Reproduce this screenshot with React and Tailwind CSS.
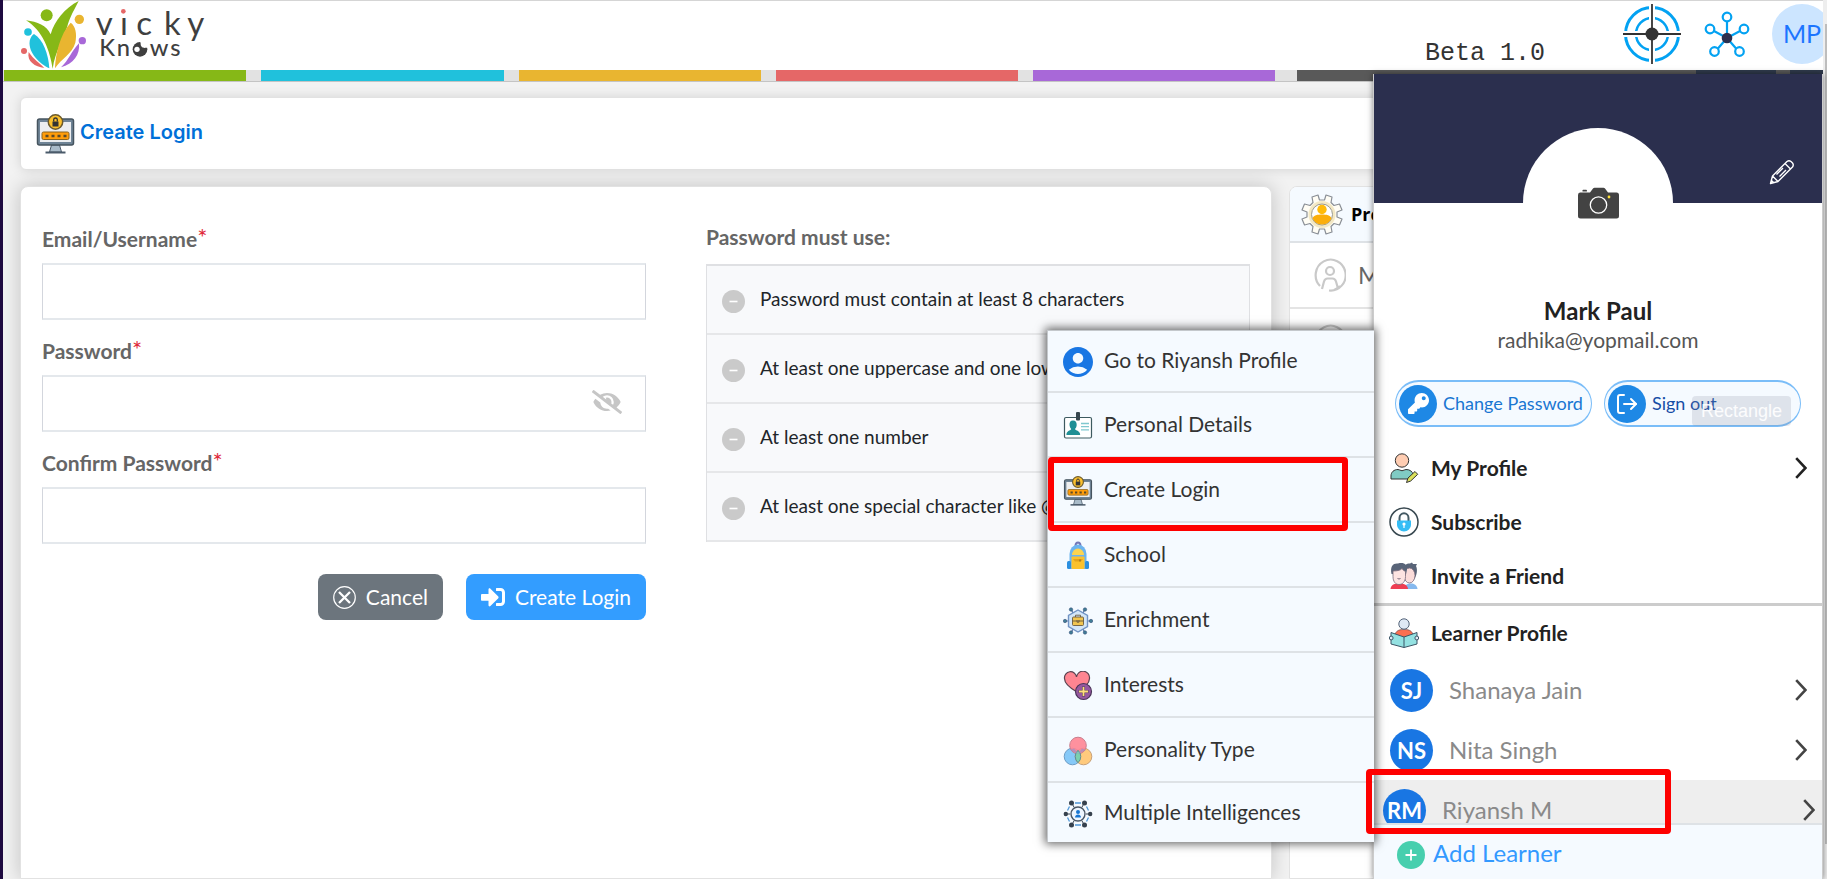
import React from "react";
import { FaEyeSlash, FaKey, FaSignInAlt } from "react-icons/fa";
import { MdAccountCircle } from "react-icons/md";
import { LogOut } from "lucide-react";

function Logo() {
  return (
    <svg width="188" height="69" viewBox="54 0 564 207" role="img" aria-label="vicky Knows">
      <g fill="#86b817">
        <circle cx="140" cy="43" r="18" />
        <path d="M78 58C112 62 140 74 152 100C163 60 195 20 236 0C215 40 207 56 202 76C188 122 166 150 158 203C150 150 128 88 78 58Z" />
      </g>
      <g fill="#e9b530">
        <circle cx="238" cy="55" r="14" />
        <path d="M212 65C226 74 232 98 226 125C216 160 184 172 165 202C166 160 180 100 212 65Z" />
      </g>
      <g fill="#20c1dc">
        <circle cx="84" cy="93" r="11.500" />
        <path d="M102 99C130 115 145 160 148 202C120 190 84 155 89 120Q93 104 102 99Z" />
      </g>
      <g fill="#e56767">
        <circle cx="72" cy="150" r="9" />
        <path d="M86 153C100 175 120 187 133 201C105 197 80 182 86 153Z" />
      </g>
      <g fill="#a868d8">
        <circle cx="247" cy="119" r="11" />
        <path d="M237 127C241 160 220 190 183 199C206 178 215 150 237 127Z" />
      </g>
      <g fill="#3f3f3f" fontFamily="Lato, sans-serif">
        <text x="287 360 409 492 562" y="103" fontSize="99">vicky</text>
        <text x="298 350 397 449 511" y="166" fontSize="71" fontWeight="500">Knows</text>
      </g>
      <rect x="356" y="20" width="29" height="26" fill="#fff" />
      <circle cx="370" cy="31" r="7" fill="#e56767" />
      <circle cx="420" cy="144" r="25" fill="#fff" />
      <circle cx="420" cy="145" r="22" fill="#3f3f3f" />
      <path d="M419 121C434 119 447 134 443 141C436 139 432 143 426 138C419 133 425 127 419 121Z" fill="#fff" />
      <circle cx="411" cy="145" r="8" fill="#fff" />
    </svg>
  );
}

function LoginIcon({ className }) {
  return (
    <svg className={className} viewBox="0 0 38 40">
      <path d="M15 31h8l2 7H13Z" fill="#a9bbc9" stroke="#4a5a6a" />
      <path d="M9 38.500h20" stroke="#4a5a6a" strokeWidth="2" />
      <rect x="1" y="5" width="36" height="26" rx="2" fill="#6f8496" stroke="#46545f" strokeWidth="1.500" />
      <rect x="3.500" y="8" width="31" height="20" fill="#eceef0" />
      <rect x="5.500" y="18" width="27" height="7.500" rx="1.500" fill="#ff9d0a" stroke="#8a6420" />
      <path d="M9 22h3m3 0h3m3 0h3m3 0h3" stroke="#5a4a2a" strokeWidth="2.500" />
      <circle cx="19" cy="8" r="7.200" fill="#fbc02d" stroke="#6b5a2c" strokeWidth="1.500" />
      <rect x="16" y="7.500" width="6" height="5" fill="#333" />
      <path d="M17.200 7.500V5.800a1.800 1.800 0 0 1 3.600 0v1.700" fill="none" stroke="#333" strokeWidth="1.300" />
    </svg>
  );
}

const iconSize = "w-[30px] h-[30px] shrink-0";

function IdIcon() {
  return (
    <svg className={iconSize} viewBox="0 0 30 30">
      <rect x="1.500" y="6.500" width="27" height="20.500" rx="1.500" fill="#fff" stroke="#3d5a60" strokeWidth="1.200" />
      <rect x="13" y="1" width="4" height="8.500" rx="1" fill="#37474f" />
      <path d="M10 9.500c-2.700 0-3.700 2-3.500 4.500.2 2 1 3 1.700 4-1 2-4.800 1.600-4.800 6h13.800c0-4.400-4.200-4-5.200-6 .8-1 1.600-2 1.700-4 .1-2.500-1-4.500-3.700-4.500Z" fill="#1f8f95" />
      <path d="M18 12.500h8M18 15.700h8M18 18.900h8" stroke="#80c8cf" strokeWidth="1.300" />
    </svg>
  );
}

function BackpackIcon() {
  return (
    <svg className={iconSize} viewBox="0 0 30 30">
      <path d="M12.500 5a2.500 3.500 0 0 1 5 0" fill="none" stroke="#7378b8" strokeWidth="2" />
      <path d="M6.500 28V13a8.500 9.500 0 0 1 17 0v15Z" fill="#6cb4ee" />
      <rect x="4" y="20" width="4" height="8" rx="1.500" fill="#2b8fe0" />
      <rect x="22" y="20" width="4" height="8" rx="1.500" fill="#2b8fe0" />
      <path d="M9 14a6 6.500 0 0 1 12 0Z" fill="#fcd44f" />
      <rect x="8.500" y="15.500" width="13" height="12.500" rx="1" fill="#fbc12d" />
      <path d="M10 18h10l-2 2.500h-6Z" fill="#e3a31c" />
      <path d="M17 18.500v2" stroke="#7a5a20" />
    </svg>
  );
}

function EnrichmentIcon() {
  return (
    <svg className={iconSize} viewBox="0 0 30 30">
      <path d="M15 15H2M15 15h13M8.500 4l3 6M21.500 4l-3 6M8.500 26l3-6M21.500 26l-3-6" stroke="#5a78a8" strokeWidth="1.200" />
      <g fill="#3f7d96" stroke="#38507a" strokeWidth=".6">
        <circle cx="2" cy="15" r="1.700" /><circle cx="28" cy="15" r="1.700" />
        <circle cx="8" cy="3.500" r="1.700" /><circle cx="22" cy="3.500" r="1.700" />
        <circle cx="8" cy="26.500" r="1.700" /><circle cx="22" cy="26.500" r="1.700" />
      </g>
      <path d="M15 4l9.500 5.500v11L15 26l-9.500-5.500v-11Z" fill="#d3e6f8" stroke="#7193c4" strokeWidth="1.400" />
      <rect x="9.500" y="11" width="11" height="8.500" rx="1" fill="#f1c550" stroke="#6a5a40" strokeWidth=".9" />
      <path d="M12.500 11V9.200h5V11M9.500 15h11M14 14v2.200h2V14" fill="none" stroke="#6a5a40" strokeWidth=".9" />
    </svg>
  );
}

function HeartIcon() {
  return (
    <svg className={iconSize} viewBox="0 0 30 30">
      <path d="M14 21C7 17 1.500 12 1.500 7.500a6 6 0 0 1 12-1.500 6 6 0 0 1 13 1.500C26.500 12 21 17 14 21Z" fill="#ff8591" stroke="#5a4350" strokeWidth="1.200" />
      <circle cx="20.500" cy="20.500" r="8" fill="#96589f" stroke="#4a3558" strokeWidth="1.200" />
      <path d="M20.500 15.500v10M15.500 20.500h10" stroke="#55405a" strokeWidth="3" />
      <path d="M20.500 16v9M16 20.500h9" stroke="#ffdf7c" strokeWidth="1.800" />
    </svg>
  );
}

function VennIcon() {
  return (
    <svg className={iconSize} viewBox="0 0 30 30">
      <circle cx="9.500" cy="20.500" r="8.300" fill="#86c9f8" stroke="#6b9bc5" />
      <circle cx="20.500" cy="20.500" r="8.300" fill="#ffca7d" stroke="#c7a078" />
      <circle cx="15" cy="9.500" r="8.300" fill="#ff8593" fillOpacity=".9" stroke="#c97c8c" />
      <path d="M15 14.300a8.300 8.300 0 0 1 0 12.400 8.300 8.300 0 0 1 0-12.400Z" fill="#7bd0ae" stroke="#5f8c94" />
      <path d="M7 14l4-1.500L15 17.500l4-5 4 1.500-8 3.800Z" fill="#9a91c9" fillOpacity=".7" />
    </svg>
  );
}

function IntelligenceIcon() {
  return (
    <svg className={iconSize} viewBox="0 0 30 30">
      <path d="M12 4h6M12 26h6M4.500 11.500l2-4M23.500 7.500l2 4M4.500 18.500l2 4M23.500 22.500l2-4" stroke="#4f97d8" strokeWidth="1.300" />
      <path d="M2.500 15H7M23 15h4.500M8.500 3.500l2.700 5M21.500 3.500l-2.700 5M8.500 26.500l2.700-5M21.500 26.500l-2.700-5" stroke="#3a4654" />
      <g fill="#36414e">
        <circle cx="2.800" cy="15" r="2.200" /><circle cx="27.200" cy="15" r="2.200" />
        <circle cx="8.500" cy="4" r="2.500" /><circle cx="21.500" cy="4" r="2.500" />
        <circle cx="8.500" cy="26" r="2.500" /><circle cx="21.500" cy="26" r="2.500" />
      </g>
      <circle cx="15" cy="15" r="7" fill="#eef6ff" stroke="#4a5665" strokeWidth="1.400" />
      <circle cx="15" cy="13" r="2" fill="#1976d2" />
      <path d="M12 18.500c0-4 6-4 6 0Z" fill="#1976d2" />
    </svg>
  );
}

function ProfileEditIcon() {
  return (
    <svg className={iconSize} viewBox="0 0 30 30">
      <circle cx="13" cy="7.500" r="6.700" fill="#ffcdb2" stroke="#333" strokeWidth="1" />
      <path d="M2 26v-3c0-4 3-6.500 7-6.500q4 2.500 8 0c4 0 6.500 2 7 5L20 26Z" fill="#80cbc4" stroke="#333" strokeWidth="1" />
      <path d="M17.500 29.500l1.500-4.500 7-6.500 2.700 2.800-7 6.700Z" fill="#dbe15b" stroke="#333" strokeWidth="1" />
    </svg>
  );
}

function SubscribeIcon() {
  return (
    <svg className={iconSize} viewBox="0 0 30 30">
      <circle cx="15" cy="15" r="14" fill="#fff" stroke="#37474f" strokeWidth="1.500" />
      <path d="M10.500 14V11a4.500 4.700 0 0 1 9 0v3" fill="none" stroke="#455a64" strokeWidth="2" />
      <path d="M8 13.500h14v4.500a7 6.500 0 0 1-14 0Z" fill="#35bdf5" />
      <circle cx="15" cy="17" r="1.600" fill="#fff" /><path d="M15 17v4" stroke="#fff" strokeWidth="1.200" />
    </svg>
  );
}

function FriendsIcon() {
  return (
    <svg className={iconSize} viewBox="0 0 30 30">
      <path d="M15 28c1-5 4-5.500 7-5.500s6 1.500 6.500 5.500Z" fill="#86b9ee" />
      <path d="M15 10c0-6 2-7.500 6-7.500l2-1 1 1.500h4l-1 2c2 4 .5 9-1 12-3 6-8 5-11 0Z" fill="#596478" />
      <ellipse cx="20.500" cy="14.500" rx="5.500" ry="7.500" fill="#fbdcda" stroke="#77697a" strokeWidth=".8" />
      <path d="M1.500 28c.5-4.500 4-5.500 9-5.500s8 1.500 8.500 5.500Z" fill="#ef3e52" />
      <path d="M2.500 13C1 5 4 2 9 2.500c6-1.500 9.500 1 9 6l-1 5Z" fill="#596478" />
      <path d="M4 10q7 0 9-2.500 1 2 3.500 3v5c0 5-3 8-6.500 8s-6-3-6-8Z" fill="#fde4e2" stroke="#77697a" strokeWidth=".8" />
      <path d="M8.500 17.500q1.500 1 3 0" fill="none" stroke="#77697a" />
    </svg>
  );
}

function ReaderIcon() {
  return (
    <svg className={iconSize} viewBox="0 0 30 30">
      <path d="M6 16c2-4 5-4.500 9-4.500s7 .5 9 4.500l-9 5Z" fill="#fb6f51" stroke="#6b4a4a" strokeWidth=".7" />
      <circle cx="15" cy="6" r="5.200" fill="#dfe9f5" stroke="#55657a" />
      <path d="M2 14.500l13 4.500 13-4.500V26l-13 3.500L2 26Z" fill="#94e1e1" stroke="#3b5566" />
      <path d="M15 19v10.500" stroke="#3b5566" />
      <circle cx="2.200" cy="20" r="1.900" fill="#dfe9f5" stroke="#3b5566" />
      <circle cx="27.800" cy="20" r="1.900" fill="#dfe9f5" stroke="#3b5566" />
    </svg>
  );
}

function TargetIcon() {
  return (
    <svg className="w-[60px] h-[62px]" viewBox="0 0 60 62">
      <g fill="none" stroke="#03a2f2">
        <circle cx="30" cy="31" r="26.500" strokeWidth="3" />
        <circle cx="30" cy="31" r="16" strokeWidth="2.500" />
      </g>
      <path d="M30 0v62M0 31h60" stroke="#fff" strokeWidth="6" />
      <path d="M30 1v60M1 31h58" stroke="#333" strokeWidth="1.800" />
      <circle cx="30" cy="31" r="6.500" fill="#333" />
    </svg>
  );
}

function NetworkIcon() {
  return (
    <svg className="w-[46px] h-[48px]" viewBox="0 0 46 48">
      <g fill="none" stroke="#03a2f2" strokeWidth="2.200">
        <path d="M23 28V11M23 28L9 20.500M23 28l14-7.500M23 28L13.500 39M23 28l9.500 11" />
        <g fill="#fff">
          <circle cx="23" cy="7" r="4.300" /><circle cx="6" cy="19" r="4.300" /><circle cx="40" cy="19" r="4.300" />
          <circle cx="10.500" cy="41.500" r="4.300" /><circle cx="35.500" cy="41.500" r="4.300" />
        </g>
      </g>
      <circle cx="23" cy="28" r="5.300" fill="#2b2f4e" />
    </svg>
  );
}

function GearUser() {
  return (
    <svg className="h-[42px] w-[42px] shrink-0" viewBox="0 0 42 42">
      <path d="M17 2l1.500 5h5L25 2l6 2-1 5.500 3 3L38.500 11 41 17l-5 2v5l5 2-2.500 6-5.500-1.500-3 3L31 39l-6 2-1.500-5h-5L17 41l-6-2 1-5.500-3-3L3.500 32 1 26l5-2v-5l-5-2 2.500-6L9 12.500l3-3L11 4Z" fill="#fffdf5" stroke="#8a8f96" strokeWidth="1.200" strokeLinejoin="round" />
      <circle cx="21" cy="21.500" r="12" fill="#fff" stroke="#f3e8c4" strokeWidth="3" />
      <circle cx="21" cy="21.500" r="10.500" fill="#fff" stroke="#9a9a90" />
      <circle cx="21" cy="16.500" r="4.700" fill="#ffbb0b" />
      <path d="M11.500 25.500c1-3.500 5-4 9.500-4s8.500.5 9.500 4a10.500 10.500 0 0 1-19 0Z" fill="#fbae0c" />
    </svg>
  );
}

function PersonOutline() {
  return (
    <svg className="h-9 w-8 shrink-0" viewBox="0 0 32 36" fill="none" stroke="#c9c9c9" strokeWidth="2.200">
      <path d="M6 29A15 15.500 0 1 1 15 33.500M20 33A15 15.500 0 0 0 26 29" />
      <circle cx="16" cy="14" r="4" />
      <path d="M8 32l2-7.500q1-3 3.500-3h5q2.500 0 3.500 3l2 7" />
    </svg>
  );
}

function CameraIcon() {
  return (
    <svg className="h-8 w-[41px]" viewBox="0 0 41 32">
      <path d="M4.500 4.500v-1q0-.7.7-.7h3q.7 0 .7.700v1Z" fill="#434343" />
      <path d="M2 5.500h10L15 1.500q.5-.7 1.500-.7h9q1 0 1.500.7l3 4h8.500q2.500 0 2.500 2.500v21q0 2.500-2.500 2.500h-36Q0 31.500 0 29V8q0-2.500 2-2.500Z" fill="#434343" />
      <circle cx="20.500" cy="18" r="8.200" fill="none" stroke="#fff" strokeWidth="1.300" />
      <circle cx="31" cy="10" r="1.400" fill="#ffe03a" />
    </svg>
  );
}

function PencilIcon() {
  return (
    <svg className="h-[26px] w-[26px]" viewBox="0 0 26 26" fill="none" stroke="#fff" strokeWidth="1.400" strokeLinejoin="round">
      <path d="M1.500 24.500L3.500 17 18 2.500q2-1.500 4 0l1.500 1.500q1.500 2 0 4L9 22.500ZM3.500 17l5.500 5.500M16 4.500l5.500 5.500M14 9l-6.500 6.500M17 11l-6.500 6.500M1.500 24.500l1-3 2 2Z" />
    </svg>
  );
}

function Chevron() {
  return (
    <svg className="h-[22px] w-3 shrink-0" viewBox="0 0 12 22" fill="none" stroke="currentColor" strokeWidth="2.600">
      <path d="M1.200 1.200L10.500 11 1.200 20.800" />
    </svg>
  );
}

function Field({ id, label, type, children }) {
  return (
    <div>
      <label htmlFor={id} className="flex h-8 items-center text-[21px] font-bold text-[#666]">
        {label}
        <span className="-mt-1 text-[24px] font-normal text-[#e02b3b]">*</span>
      </label>
      <div className="relative mt-2">
        <input id={id} type={type} className="block h-[57px] w-full border-x border-y-2 border-x-[#d3d6dd] border-y-[#e4e8ec] bg-white px-4 text-xl outline-none" />
        {children}
      </div>
    </div>
  );
}

function Rule({ children }) {
  return (
    <li className="flex h-[69px] items-center gap-[15px] border-b-2 border-[#e6e7e9] pl-[15px] whitespace-nowrap text-[19px] text-[#212529]">
      <svg className="mt-1 h-[23px] w-[23px] shrink-0" viewBox="0 0 23 23">
        <circle cx="11.500" cy="11.500" r="11.500" fill="#cacaca" />
        <path d="M7.500 11.500h8" stroke="#fff" strokeWidth="1.600" />
      </svg>
      {children}
    </li>
  );
}

const flyout = [
  ["Go to Riyansh Profile", <MdAccountCircle className="-mx-[3px] h-9 w-9 shrink-0 text-[#1976e3]" />],
  ["Personal Details", <IdIcon />],
  ["Create Login", <LoginIcon className={iconSize} />],
  ["School", <BackpackIcon />],
  ["Enrichment", <EnrichmentIcon />],
  ["Interests", <HeartIcon />],
  ["Personality Type", <VennIcon />],
  ["Multiple Intelligences", <IntelligenceIcon />],
];

function Flyout() {
  return (
    <ul className="absolute top-[256px] right-full w-[327px] border-t border-l border-[#c4c8cc] bg-[#f5faff] shadow-[0_0_9px_2px_rgba(0,0,0,0.6)]">
      {flyout.map(([label, icon]) => (
        <li key={label} className="relative h-[65px] border-b-2 border-[#dee2e6] first:h-[62px] last:h-[59px] last:border-b-0">
          <button className="flex h-full w-full items-center gap-[11px] pt-[2px] pl-[15px] text-left text-[21px] text-[#333]">
            {icon}
            <span className="pb-1">{label}</span>
          </button>
          {label === "Create Login" && (
            <span className="pointer-events-none absolute -top-px left-0 h-[74px] w-[300px] rounded-sm border-6 border-[#fe0000]" />
          )}
        </li>
      ))}
    </ul>
  );
}

function MenuItem({ icon, label, chevron }) {
  return (
    <button className="flex h-[54px] w-full items-center gap-3 pr-[15px] pl-[15px] text-left text-[21px] font-bold text-[#222]">
      {icon}
      <span className="flex-1">{label}</span>
      {chevron && <Chevron />}
    </button>
  );
}

function Learner({ initials, name, active }) {
  return (
    <button className={`flex h-[60px] w-full items-center gap-4 text-left text-[24px] text-[#8a8a8a] ${active ? "bg-[#eee] pr-[7px] pl-[9px]" : "pr-[15px] pl-4"}`}>
      <span className="flex h-[43px] w-[43px] items-center justify-center rounded-full bg-[#1976e3] text-[22px] font-bold text-white">{initials}</span>
      <span className="flex-1">{name}</span>
      <span className="text-[#444]"><Chevron /></span>
    </button>
  );
}

function ProfilePanel() {
  return (
    <aside className="absolute top-[74px] right-[4px] bottom-0 z-10 flex w-[450px] flex-col border-x border-[#ccc] bg-white shadow-[0_0_6px_rgba(0,0,0,0.5)]">
      <Flyout />
      <div className="flex h-[129px] shrink-0 items-end justify-between bg-[#2b2f4e] px-[27px] pb-[18px]">
        <span className="w-[26px]" />
        <div className="-mb-[93px] flex h-[150px] w-[150px] items-center justify-center rounded-full bg-white">
          <CameraIcon />
        </div>
        <button aria-label="Edit banner"><PencilIcon /></button>
      </div>
      <div className="mt-[92px] text-center">
        <h2 className="text-[24px] leading-8 font-bold text-[#222]">Mark Paul</h2>
        <p className="text-[21px] leading-[26px] text-[#555]">radhika@yopmail.com</p>
      </div>
      <div className="relative mt-[27px] flex shrink-0 justify-center gap-3 text-[18px]">
        <button className="flex h-[47px] w-[197px] items-center gap-[6px] rounded-full border border-y-2 border-[#7abdf8] bg-[#f5faff] pl-[3px] whitespace-nowrap text-[#1976d2]">
          <span className="flex h-[38px] w-[38px] shrink-0 items-center justify-center rounded-full bg-[#1e88e5] text-white"><FaKey className="h-[21px] w-[21px]" /></span>
          Change Password
        </button>
        <button className="flex h-[47px] w-[197px] items-center gap-[6px] rounded-full border border-y-2 border-[#7abdf8] bg-[#f5faff] pl-[3px] whitespace-nowrap text-[#174ea6]">
          <span className="flex h-[38px] w-[38px] shrink-0 items-center justify-center rounded-full bg-[#1e88e5] text-white"><LogOut className="h-6 w-6" /></span>
          Sign out
        </button>
        <span className="pointer-events-none absolute top-4 right-[31px] flex h-[30px] w-[99px] items-center justify-center rounded-sm bg-[#80869a]/20 font-['Liberation_Sans',sans-serif] text-[18px] text-white/90">Rectangle</span>
      </div>
      <nav className="mt-[14px] shrink-0 border-b-3 border-[#ccc]">
        <MenuItem icon={<ProfileEditIcon />} label="My Profile" chevron />
        <MenuItem icon={<SubscribeIcon />} label="Subscribe" />
        <MenuItem icon={<FriendsIcon />} label="Invite a Friend" />
      </nav>
      <div className="min-h-0 flex-1 overflow-hidden">
        <MenuItem icon={<ReaderIcon />} label="Learner Profile" />
        <Learner initials="SJ" name="Shanaya Jain" />
        <Learner initials="NS" name="Nita Singh" />
        <Learner initials="RM" name="Riyansh M" active />
      </div>
      <button className="flex h-14 shrink-0 items-start gap-2 border-t-2 border-[#dee2e6] bg-[#f5faff] pt-3 pl-[23px] text-left text-[24px] text-[#3399ff]">
        <svg className="mt-1 h-7 w-7" viewBox="0 0 28 28"><circle cx="14" cy="14" r="14" fill="#47cfae" /><path d="M14 8.500v11M8.500 14h11" stroke="#fff" strokeWidth="1.800" /></svg>
        <span className="leading-8">Add Learner</span>
      </button>
      <span className="pointer-events-none absolute bottom-[45px] -left-2 h-[65px] w-[305px] rounded-sm border-6 border-[#fe0000]" />
    </aside>
  );
}

export default function App() {
  return (
    <div className="relative flex h-screen overflow-hidden border-l-3 border-[#1e0a40] bg-[#f2f2f2] font-['Lato',sans-serif]">
      <div className="flex min-w-0 flex-1 flex-col">
        <header className="flex h-[70px] shrink-0 items-start justify-between border-t border-[#d5d5d5] bg-white pl-[15px]">
          <Logo />
          <div className="flex items-start">
            <span className="mt-[37px] font-['Liberation_Mono',monospace] text-[25px] leading-8 text-[#333]">Beta 1.0</span>
            <button aria-label="Target" className="mt-[2px] ml-[77px]"><TargetIcon /></button>
            <button aria-label="Network" className="mt-[9px] ml-[22px]"><NetworkIcon /></button>
            <div className="mt-[3px] ml-[22px] w-[51px] overflow-hidden">
              <button className="h-[60px] w-[60px] rounded-full bg-[#cce5ff] text-[25px] text-[#1c75ff]">MP</button>
            </div>
          </div>
        </header>
        <div className="flex h-3 shrink-0 gap-[15px] border-b border-[#c4c4c4] bg-[#e2e2e2] pl-px">
          <div className="w-[13.32%] bg-[#86b817]" />
          <div className="w-[13.32%] bg-[#20c1dc]" />
          <div className="w-[13.32%] bg-[#e9b530]" />
          <div className="w-[13.32%] bg-[#e56767]" />
          <div className="w-[13.32%] bg-[#a868d8]" />
          <div className="ml-[7px] flex flex-1 bg-[#595959]">
            <div className="ml-auto w-20 bg-[#2f3a4c]" />
            <div className="ml-[14px] w-[33px] bg-[#2f3a4c]" />
          </div>
        </div>
        <main className="flex min-h-0 flex-1 flex-col gap-4 pt-[15px] pr-6 pl-[17px]">
          <div className="flex h-[73px] shrink-0 items-center gap-[5px] rounded-md border border-[#e2e2e2] bg-white pl-[15px] shadow-[0_0_12px_rgba(0,0,0,0.12)]">
            <LoginIcon className="h-10 w-[39px]" />
            <h1 className="pb-1 font-['Inter',sans-serif] text-[20px] font-semibold text-[#0070d8]">Create Login</h1>
          </div>
          <div className="flex min-h-0 flex-1 gap-[17px]">
            <section className="flex flex-1 gap-[60px] rounded-t-lg border border-[#e2e2e2] bg-white px-[21px] shadow-[0_0_20px_rgba(0,0,0,0.2)]">
              <form className="flex w-[604px] shrink flex-col gap-[15px] pt-9" onSubmit={(e) => e.preventDefault()}>
                <Field id="email" label="Email/Username" type="text" />
                <Field id="password" label="Password" type="password">
                  <button type="button" aria-label="Show password" className="absolute top-[14px] right-6 text-[#c6c6c6]"><FaEyeSlash className="h-[26px] w-[30px]" /></button>
                </Field>
                <Field id="confirm" label="Confirm Password" type="password" />
                <div className="mt-[15px] flex justify-end gap-[23px] text-[21px] text-white">
                  <button type="button" className="flex h-[46px] items-center gap-[10px] rounded-lg bg-[#6c757d] px-[15px]">
                    <svg className="h-[23px] w-[23px]" viewBox="0 0 23 23" fill="none" stroke="#fff"><circle cx="11.500" cy="11.500" r="10.800" strokeWidth="1.200" /><path d="M6 6l11 11M17 6L6 17" strokeWidth="2.300" /></svg>
                    Cancel
                  </button>
                  <button type="submit" className="flex h-[46px] items-center gap-[10px] rounded-lg bg-[#339dff] px-[15px]">
                    <FaSignInAlt className="h-6 w-6" />
                    Create Login
                  </button>
                </div>
              </form>
              <div className="min-w-0 flex-1 pt-9">
                <h2 className="flex h-8 items-center pb-1 text-[21px] font-bold text-[#666]">Password must use:</h2>
                <ul className="mt-[9px] overflow-hidden border-x border-t-2 border-[#dfe0e3] bg-[#f8f9fb]">
                  <Rule>Password must contain at least 8 characters</Rule>
                  <Rule>At least one uppercase and one lowercase</Rule>
                  <Rule>At least one number</Rule>
                  <Rule>At least one special character like @#$</Rule>
                </ul>
              </div>
            </section>
            <section className="w-[510px] overflow-hidden rounded-t-lg border border-[#e2e2e2] bg-white">
              <h2 className="flex h-14 items-center gap-2 border-b-2 border-[#dee2e6] bg-[#f5faff] pl-[11px] font-['Open_Sans',sans-serif] text-[18px] font-bold text-black"><GearUser />Profile</h2>
              <div className="flex h-[66px] items-center gap-3 border-b-2 border-[#e4e4e4] pl-6 text-[24px] text-[#666]"><PersonOutline />Mark</div>
              <div className="flex h-[66px] items-center border-b-2 border-[#e4e4e4] pl-6"><PersonOutline /></div>
            </section>
          </div>
        </main>
      </div>
      <div className="h-full w-[4px] shrink-0 bg-[#eee] pt-6 pl-[2px]">
        <div className="h-[820px] max-h-full w-full bg-[#bdbdbd]" />
      </div>
      <ProfilePanel />
    </div>
  );
}
